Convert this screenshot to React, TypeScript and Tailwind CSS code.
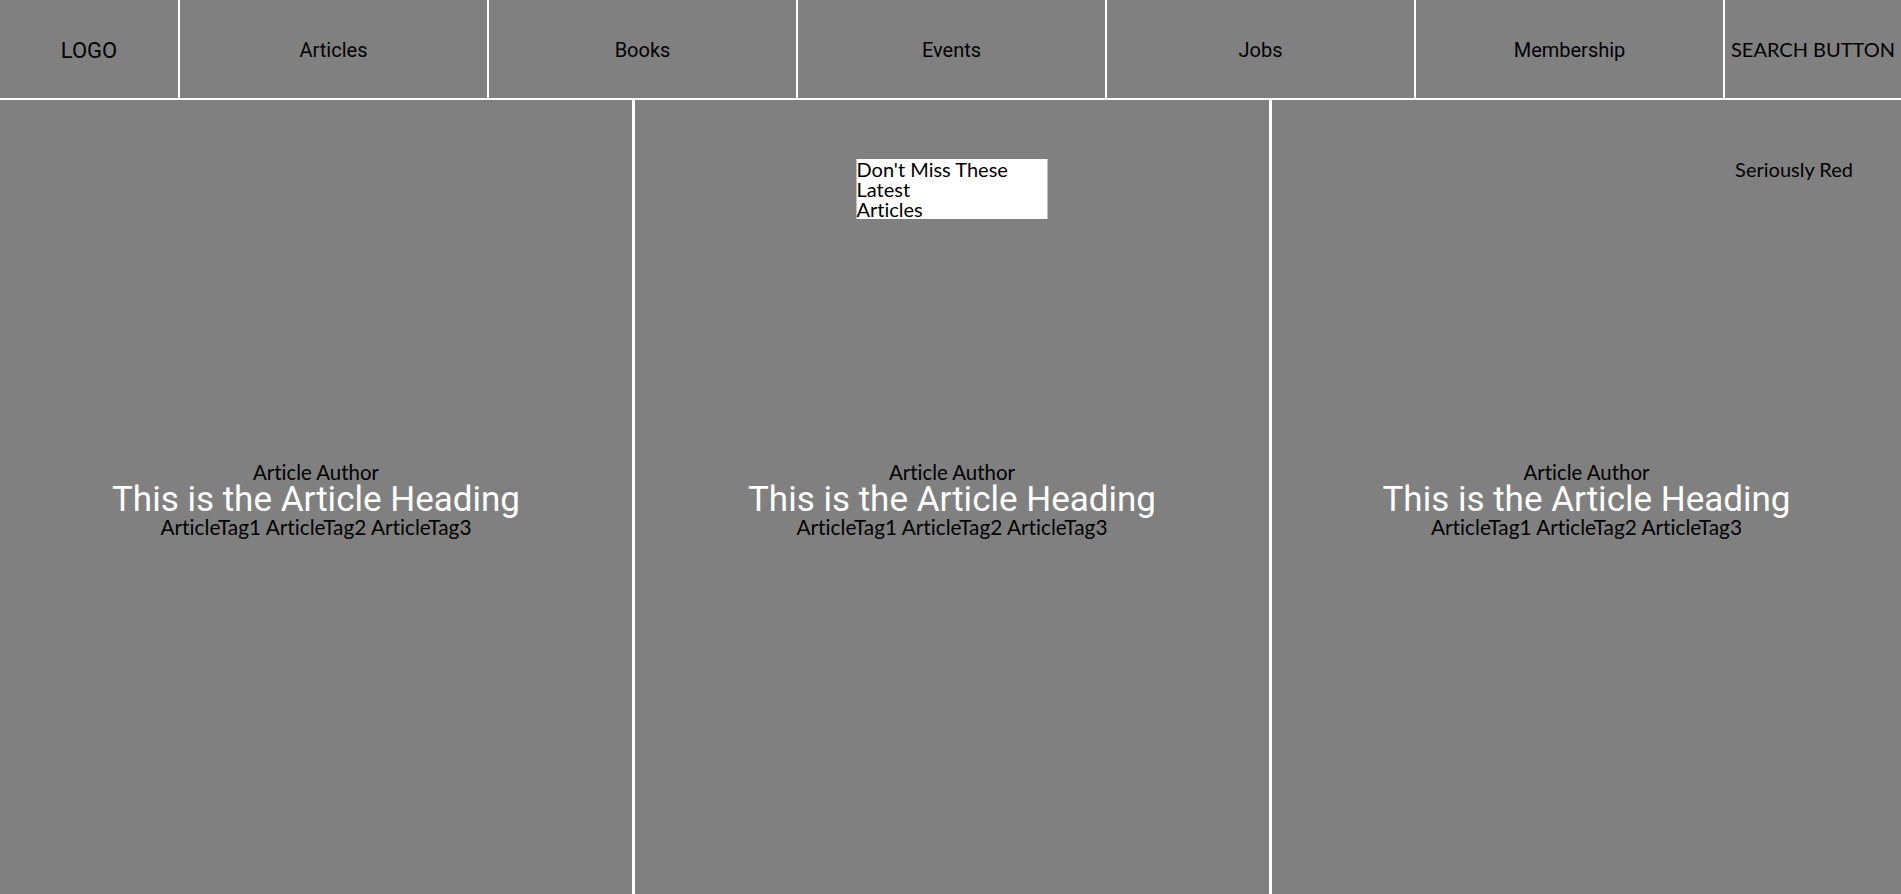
const navLinks = ["Articles", "Books", "Events", "Jobs", "Membership"];

const article = {
  author: "Article Author",
  heading: "This is the Article Heading",
  tags: ["ArticleTag1", "ArticleTag2", "ArticleTag3"],
};

function ArticleBlock() {
  return (
    <div className="flex flex-col items-center pt-[5px] text-center">
      <p className="font-['Lato',sans-serif] text-[20.4px] leading-[21px] text-black [font-variant-ligatures:none]">
        {article.author}
      </p>
      <h2 className="font-['Roboto',sans-serif] text-[35px] leading-[33px] text-white">
        {article.heading}
      </h2>
      <p className="font-['Lato',sans-serif] text-[20.8px] leading-[21px] text-black [font-variant-ligatures:none]">
        {article.tags.join(" ")}
      </p>
    </div>
  );
}

export default function App() {
  return (
    <div className="h-screen overflow-hidden bg-[#808080]">
      <nav className="flex h-[100px] border-b-2 border-white">
        <div className="flex w-[178px] items-center justify-center pt-[2px] font-['Roboto',sans-serif] text-[22px] text-black">
          LOGO
        </div>
        {navLinks.map((link) => (
          <a
            key={link}
            href="#"
            className="flex w-[309px] items-center justify-center border-l-2 border-white pt-[2px] font-['Roboto',sans-serif] text-[20px] text-black"
          >
            {link}
          </a>
        ))}
        <button className="flex flex-1 items-center justify-center border-l-2 border-white font-['Lato',sans-serif] text-[20px] text-black">
          SEARCH BUTTON
        </button>
      </nav>

      <main className="flex h-[794px]">
        <section className="flex w-[632px] items-center justify-center">
          <ArticleBlock />
        </section>

        <section className="relative flex w-[637px] items-center justify-center border-l-[3px] border-white">
          <div className="absolute left-1/2 top-[59px] w-[191px] -translate-x-1/2 bg-white font-['Lato',sans-serif] text-[20px] leading-[20px] text-black [font-variant-ligatures:none]">
            <span className="block">Don't Miss These</span>
            <span className="block">Latest</span>
            <span className="block">Articles</span>
          </div>
          <ArticleBlock />
        </section>

        <section className="relative flex flex-1 items-center justify-center border-l-[3px] border-white">
          <p className="absolute right-[48px] top-[54px] font-['Lato',sans-serif] text-[20px] text-black">
            Seriously Red
          </p>
          <ArticleBlock />
        </section>
      </main>
    </div>
  );
}
